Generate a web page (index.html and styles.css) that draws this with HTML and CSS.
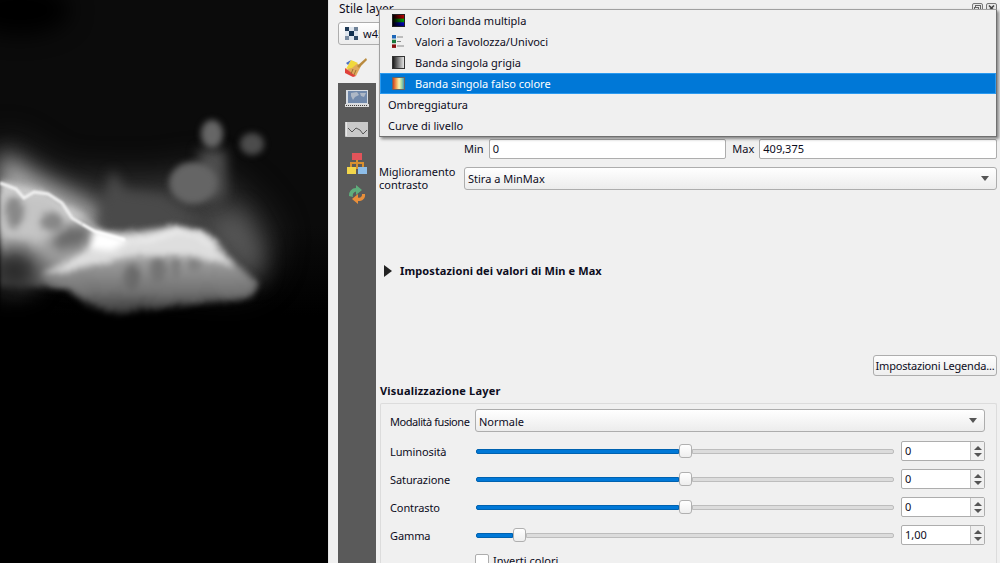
FILE: index.html
```html
<!DOCTYPE html>
<html lang="it">
<head>
<meta charset="utf-8">
<title>Stile layer</title>
<link rel="stylesheet" href="styles.css">
</head>
<body>
<div class="app">
  <div class="map">
    <svg class="terrain" viewBox="0 0 328 563" width="328" height="563" aria-hidden="true">
      <defs>
        <linearGradient id="sky" x1="0" y1="0" x2="0" y2="1"><stop offset="0" stop-color="#0b0b0b"/><stop offset="0.4" stop-color="#0b0b0b"/><stop offset="0.56" stop-color="#000"/></linearGradient>
        <linearGradient id="land" gradientUnits="userSpaceOnUse" x1="0" y1="225" x2="0" y2="310"><stop offset="0" stop-color="#cfcfcf"/><stop offset="0.4" stop-color="#a0a0a0"/><stop offset="0.8" stop-color="#707070"/><stop offset="1" stop-color="#3a3a3a"/></linearGradient>
        <filter id="b40" color-interpolation-filters="sRGB" x="-60%" y="-60%" width="220%" height="220%"><feGaussianBlur stdDeviation="18"/></filter>
        <filter id="b12" color-interpolation-filters="sRGB" x="-60%" y="-60%" width="220%" height="220%"><feGaussianBlur stdDeviation="11"/></filter>
        <filter id="b6" color-interpolation-filters="sRGB" x="-60%" y="-60%" width="220%" height="220%"><feGaussianBlur stdDeviation="6"/></filter>
        <filter id="b3" color-interpolation-filters="sRGB" x="-60%" y="-60%" width="220%" height="220%"><feGaussianBlur stdDeviation="3"/></filter>
        <filter id="b1" color-interpolation-filters="sRGB" x="-60%" y="-60%" width="220%" height="220%"><feGaussianBlur stdDeviation="1.2"/></filter>
        <filter id="rough" color-interpolation-filters="sRGB" filterUnits="userSpaceOnUse" x="0" y="0" width="328" height="563">
          <feTurbulence type="fractalNoise" baseFrequency="0.04" numOctaves="2" seed="4" result="n"/>
          <feDisplacementMap in="SourceGraphic" in2="n" scale="5" xChannelSelector="R" yChannelSelector="G"/>
          <feGaussianBlur stdDeviation="1.6"/>
        </filter>
      </defs>
      <rect width="328" height="563" fill="url(#sky)"/>
      <ellipse cx="20" cy="10" rx="50" ry="25" fill="#000" filter="url(#b12)"/>
      <path d="M0 140 L60 178 L110 180 L165 180 L205 170 L245 200 L272 235 L262 270 L240 285 L100 270 L0 250Z" fill="#3c3c3c" filter="url(#b40)"/>
      <path d="M0 150 L35 175 L85 200 L125 230 L0 240Z" fill="#aaa" filter="url(#b12)"/>
      <path d="M95 225 L112 170 L125 190 L165 195 L205 225 L120 240Z" fill="#4a4a4a" filter="url(#b6)"/>
      <path d="M205 225 L240 210 L262 250 L258 283Z" fill="#575757" filter="url(#b12)"/>
      <path d="M198 150 L226 150 L226 195 L210 205 L200 175Z" fill="#4e4e4e" filter="url(#b6)"/>
      <ellipse cx="212" cy="134" rx="11" ry="14" fill="#666" filter="url(#b3)"/>
      <ellipse cx="252" cy="144" rx="12" ry="11" fill="#4c4c4c" filter="url(#b3)"/>
      <ellipse cx="193" cy="183" rx="24" ry="21" fill="#656565" filter="url(#b3)"/>
      <g filter="url(#rough)">
        <path d="M0 180 L40 190 L75 210 L100 232 L130 232 L180 226 L205 233 L235 262 L258 283 L251 297 L220 302 L160 308 L120 313 L90 305 L68 290 L40 285 L0 285Z" fill="url(#land)" filter="url(#b3)"/>
        <ellipse cx="14" cy="272" rx="28" ry="24" fill="#2a2a2a" filter="url(#b12)"/>
        <path d="M0 188 L50 198 L68 215 L48 238 L0 232Z" fill="#c4c4c4" filter="url(#b6)"/>
        <ellipse cx="14" cy="212" rx="9" ry="16" fill="#888" filter="url(#b3)"/>
        <ellipse cx="52" cy="222" rx="12" ry="9" fill="#888" filter="url(#b3)"/>
        <path d="M66 225 L88 224 L92 238 L82 248 L55 252 L50 240Z" fill="#6a6a6a" filter="url(#b6)"/>
        <ellipse cx="132" cy="278" rx="8" ry="14" fill="#6a6a6a" filter="url(#b3)"/>
        <ellipse cx="158" cy="270" rx="8" ry="14" fill="#747474" filter="url(#b3)"/>
        <ellipse cx="176" cy="268" rx="5" ry="13" fill="#7c7c7c" filter="url(#b3)"/>
        <ellipse cx="195" cy="262" rx="6" ry="11" fill="#808080" filter="url(#b3)"/>
        <path d="M40 275 L92 248 L128 240 L178 228 L205 236 L236 266 L195 256 L130 256 L85 268Z" fill="#dedede" filter="url(#b3)"/>
        <path d="M128 242 L155 238 L178 230 L198 234 L215 246" fill="none" stroke="#f4f4f4" stroke-width="4" filter="url(#b3)"/>
      </g>
      <path d="M0 183 L16 189 L24 198 L34 192 L48 194 L62 203 L72 218 L82 224" fill="none" stroke="#f2f2f2" stroke-width="3" filter="url(#b1)"/>
      <path d="M82 224 L96 232 L125 240" fill="none" stroke="#fff" stroke-width="3" filter="url(#b1)"/>
      <path d="M96 232 L126 241 L112 249 L92 248Z" fill="#fff" stroke="#fff" stroke-width="4" filter="url(#b3)"/>
    </svg>
  </div>
  <div class="strip"></div>
  <main class="panel">
    <div class="title-bar">
      <span class="title">Stile layer</span>
      <span class="dock-buttons">
        <svg width="11" height="10" viewBox="0 0 11 10" aria-hidden="true"><rect x="0.5" y="0.5" width="10" height="9" rx="1.5" fill="#e8e8e8" stroke="#777"/><rect x="3.5" y="2.5" width="5" height="4" fill="none" stroke="#666"/><rect x="2.5" y="4.5" width="4" height="3" fill="#e8e8e8" stroke="#666"/></svg>
        <svg width="11" height="10" viewBox="0 0 11 10" aria-hidden="true"><rect x="0.5" y="0.5" width="10" height="9" rx="1.5" fill="#e8e8e8" stroke="#777"/><path d="M3 2.5 L8 7.5 M8 2.5 L3 7.5" stroke="#444" stroke-width="1.6"/></svg>
      </span>
    </div>
    <div class="layer-row">
      <div class="combo layer-combo">
        <svg width="13" height="13" viewBox="0 0 13 13" aria-hidden="true"><rect width="13" height="13" fill="#dfe6ee"/><rect x="0" y="0" width="4" height="4" fill="#1f3a56"/><rect x="4" y="4" width="5" height="5" fill="#12304f"/><rect x="9" y="0" width="4" height="4" fill="#6f8298"/><rect x="0" y="9" width="4" height="4" fill="#7b8da2"/><rect x="9" y="9" width="4" height="4" fill="#324d69"/></svg>
        <span>w45</span>
      </div>
    </div>
    <div class="body">
      <nav class="tabs">
        <div class="tab-active">
          <svg width="24" height="22" viewBox="0 0 24 22" aria-hidden="true"><path d="M3 14 L9 5 L17 10 L12 20Z" fill="#e0aa5c"/><path d="M2 13 L7 4 L14 7 L8 12Z" fill="#f1d93c"/><path d="M7 4 L4 9 L2 7Z" fill="#4a6fc0"/><path d="M1 12 L12 20 L9 21 L1 17Z" fill="#e0413a"/><path d="M13 10 L22 2 L23 4 L15 12Z" fill="#b98a3e"/><path d="M9 13 L7 18 M12 14 L10 19" stroke="#9c7433" stroke-width="1"/></svg>
        </div>
        <div class="tab-rail">
          <svg class="rail-icon" width="24" height="20" viewBox="0 0 24 20" aria-hidden="true"><rect x="1" y="1" width="22" height="14" fill="#d8dde3"/><rect x="3" y="2" width="19" height="12" fill="#7189ab"/><path d="M6 4 L12 3 L14 6 L10 8 L8 11 L6 7Z M15 4 L21 4 L19 8 L16 7Z" fill="#aeb8c6"/><rect x="0" y="15" width="24" height="3" fill="#dcdcdc"/><path d="M1 16.5 H23" stroke="#444" stroke-dasharray="1 1"/></svg>
          <svg class="rail-icon" width="24" height="17" viewBox="0 0 24 17" aria-hidden="true"><rect x="1" y="1" width="22" height="13" fill="#c9c9c9"/><path d="M1 1 V15 H23" fill="none" stroke="#f0f0f0" stroke-width="1.6"/><path d="M3 7 L7 11 L11 7 L15 9 L18 13 L22 9" fill="none" stroke="#555"/></svg>
          <svg class="rail-icon tree" width="20" height="23" viewBox="0 0 20 23" aria-hidden="true"><path d="M4 16 V11 H16 V16 M10 7 V17" fill="none" stroke="#d9902f" stroke-width="2"/><rect x="5" y="1" width="10" height="7" fill="#e2545a"/><rect x="0" y="15" width="9" height="7" fill="#f2d64b"/><rect x="11" y="15" width="9" height="7" fill="#8dbde8"/></svg>
          <svg class="rail-icon" width="20" height="20" viewBox="0 0 20 20" aria-hidden="true"><path d="M2 12 A7 7 0 0 1 9 4 V1 L15 6 L9 11 V7.5 A4 4 0 0 0 6 13 Z" fill="#5fae7c"/><path d="M18 10 A6 6 0 0 1 11 17 V20 L5 15 L11 10 V13.5 A3 3 0 0 0 15 10 Z" fill="#e98f3a"/></svg>
        </div>
      </nav>
      <section class="content">
        <div class="minmax">
          <label class="mm-label">Min</label>
          <div class="input">0</div>
          <label class="mm-label">Max</label>
          <div class="input">409,375</div>
        </div>
        <div class="contrast">
          <label class="contrast-label">Miglioramento contrasto</label>
          <div class="combo grow"><span>Stira a MinMax</span><i class="caret"></i></div>
        </div>
        <div class="collapsed">
          <i class="arrow"></i>
          <b>Impostazioni dei valori di Min e Max</b>
        </div>
        <div class="legend-row"><div class="button">Impostazioni Legenda...</div></div>
        <h2 class="group-title">Visualizzazione Layer</h2>
        <div class="group">
          <div class="form-row">
            <label class="form-label tight">Modalità fusione</label>
            <div class="combo grow"><span>Normale</span><i class="caret"></i></div>
          </div>
          <div class="slider-row">
            <label class="form-label">Luminosità</label>
            <div class="slider"><div class="fill half"></div><div class="knob"></div><div class="rest"></div></div>
            <div class="spin"><span class="spin-value">0</span><span class="spin-btns"><i class="up"></i><i class="down"></i></span></div>
          </div>
          <div class="slider-row">
            <label class="form-label">Saturazione</label>
            <div class="slider"><div class="fill half"></div><div class="knob"></div><div class="rest"></div></div>
            <div class="spin"><span class="spin-value">0</span><span class="spin-btns"><i class="up"></i><i class="down"></i></span></div>
          </div>
          <div class="slider-row">
            <label class="form-label">Contrasto</label>
            <div class="slider"><div class="fill half"></div><div class="knob"></div><div class="rest"></div></div>
            <div class="spin"><span class="spin-value">0</span><span class="spin-btns"><i class="up"></i><i class="down"></i></span></div>
          </div>
          <div class="slider-row">
            <label class="form-label">Gamma</label>
            <div class="slider"><div class="fill low"></div><div class="knob"></div><div class="rest"></div></div>
            <div class="spin"><span class="spin-value">1,00</span><span class="spin-btns"><i class="up"></i><i class="down"></i></span></div>
          </div>
          <div class="check-row">
            <i class="checkbox"></i><span>Inverti colori</span>
          </div>
        </div>
      </section>
    </div>
    <div class="popup">
      <div class="item">
        <svg width="13" height="13" viewBox="0 0 13 13" aria-hidden="true"><defs><linearGradient id="rgb" x1="0" y1="0" x2="0" y2="1"><stop offset="0" stop-color="#c00"/><stop offset="0.33" stop-color="#900"/><stop offset="0.34" stop-color="#0b0"/><stop offset="0.66" stop-color="#080"/><stop offset="0.67" stop-color="#00d"/><stop offset="1" stop-color="#008"/></linearGradient><linearGradient id="fade"><stop offset="0" stop-color="#000"/><stop offset="1" stop-color="#000" stop-opacity="0"/></linearGradient></defs><rect x="0.5" y="0.5" width="12" height="12" fill="url(#rgb)" stroke="#222"/><rect x="1" y="1" width="11" height="11" fill="url(#fade)"/></svg>
        <span>Colori banda multipla</span>
      </div>
      <div class="item">
        <svg width="13" height="13" viewBox="0 0 13 13" aria-hidden="true"><rect x="0" y="0" width="4" height="3.5" fill="#1c66b8"/><rect x="0" y="4.7" width="4" height="3.5" fill="#1a7a3c"/><rect x="0" y="9.4" width="4" height="3.5" fill="#8a1010"/><path d="M5 2 H11 M5 6.5 H9 M5 11 H12" stroke="#888"/></svg>
        <span>Valori a Tavolozza/Univoci</span>
      </div>
      <div class="item">
        <svg width="13" height="13" viewBox="0 0 13 13" aria-hidden="true"><defs><linearGradient id="gray"><stop offset="0" stop-color="#111"/><stop offset="1" stop-color="#eee"/></linearGradient></defs><rect x="0.5" y="0.5" width="12" height="12" fill="url(#gray)" stroke="#333"/></svg>
        <span>Banda singola grigia</span>
      </div>
      <div class="item selected">
        <svg width="13" height="13" viewBox="0 0 13 13" aria-hidden="true"><defs><linearGradient id="false"><stop offset="0" stop-color="#c8321e"/><stop offset="0.3" stop-color="#f0a050"/><stop offset="0.55" stop-color="#fbf4b0"/><stop offset="0.8" stop-color="#8fd0a0"/><stop offset="1" stop-color="#3a80c0"/></linearGradient></defs><rect x="0.5" y="0.5" width="12" height="12" fill="url(#false)" stroke="#666"/></svg>
        <span>Banda singola falso colore</span>
      </div>
      <div class="item plain"><span>Ombreggiatura</span></div>
      <div class="item plain"><span>Curve di livello</span></div>
    </div>
  </main>
</div>
</body>
</html>
```
FILE: styles.css
```css
* { box-sizing: border-box; }
html, body { margin: 0; height: 100%; overflow: hidden; }
body {
  font-family: "Noto Sans", "Open Sans", sans-serif;
  font-size: 11px;
  line-height: 14px;
  color: #0c0c1c;
  background: #f0f0f0;
}
.app { display: flex; width: 1000px; height: 563px; overflow: hidden; }
.map { width: 328px; flex: none; background: #000; }
.terrain { display: block; }
.strip { width: 10px; flex: none; background: #f0f0f0; border-left: 1px solid #e4e4e4; }
.panel { position: relative; flex: 1; min-width: 0; display: flex; flex-direction: column; }

.title-bar { height: 22px; display: flex; justify-content: space-between; padding: 1px 3px 0 1px; flex: none; }
.title { font-size: 12px; line-height: 15px; }
.dock-buttons { display: flex; gap: 3px; height: 10px; margin-top: 2px; }
.layer-row { height: 28px; flex: none; padding-right: 3px; }

.combo {
  display: flex; align-items: center; height: 23px; padding: 0 3px;
  background: linear-gradient(#ffffff, #ececec);
  border: 1px solid #adadad; border-radius: 3px;
  white-space: nowrap;
}
.layer-combo { gap: 5px; padding-left: 6px; }
.grow { flex: 1; min-width: 0; justify-content: space-between; }
.caret { width: 0; height: 0; border-left: 4px solid transparent; border-right: 4px solid transparent; border-top: 5px solid #555; margin-right: 4px; }

.body { flex: 1; display: flex; min-height: 0; }
.tabs { width: 38px; flex: none; display: flex; flex-direction: column; }
.tab-active { height: 33px; padding: 6px 0 0 6px; }
.tab-rail { flex: 1; background: #5a5a5a; display: flex; flex-direction: column; align-items: center; padding-top: 6px; }
.rail-icon { display: block; margin-bottom: 12px; }
.rail-icon.tree { margin-bottom: 9px; margin-top: 2px; }

.content { flex: 1; min-width: 0; padding: 89px 3px 0 2px; display: flex; flex-direction: column; }
.minmax { display: flex; align-items: center; height: 20px; padding-left: 86px; }
.mm-label { margin-right: 5px; white-space: nowrap; }
.minmax .input + .mm-label { margin-left: 6px; }
.input {
  flex: 1; min-width: 0; height: 20px; padding: 2px 3px;
  background: #fff; border: 1px solid #adadad; border-radius: 2px;
}
.contrast { display: flex; align-items: center; margin-top: 8px; height: 23px; }
.contrast-label { width: 86px; flex: none; line-height: 13px; padding: 0 0 2px 1px; }
.collapsed { display: flex; align-items: center; gap: 8px; height: 16px; margin-top: 74px; padding-left: 6px; font-size: 11px; }
.collapsed b { letter-spacing: 0.11px; }
.arrow { width: 0; height: 0; border-top: 6px solid transparent; border-bottom: 6px solid transparent; border-left: 8px solid #222; }
.legend-row { display: flex; justify-content: flex-end; margin-top: 77px; }
.button {
  height: 21px; padding: 3px 0; width: 124px; white-space: nowrap; text-align: center; letter-spacing: -0.2px;
  background: linear-gradient(#fdfdfd, #eeeeee); border: 1px solid #adadad; border-radius: 3px;
}
.group-title { margin: 8px 0 5px 2px; font-size: 11px; line-height: 14px; font-weight: 700; letter-spacing: 0.2px; }
.group { margin-left: 2px; border: 1px solid #dcdcdc; border-bottom: none; border-radius: 2px; padding: 5px 11px 0 9px; flex: 1; }
.form-row { display: flex; align-items: center; height: 23px; }
.form-row .form-label, .form-row .combo span { padding-top: 2px; }
.form-label { width: 85px; flex: none; white-space: nowrap; letter-spacing: -0.1px; }
.tight { letter-spacing: -0.45px; }
.slider-row { display: flex; align-items: center; height: 20px; margin-top: 8px; }
.slider-row .form-label { padding-top: 2px; }
.form-row + .slider-row { margin-top: 9px; }
.slider { flex: 1; min-width: 0; display: flex; align-items: center; margin: 0 7px 0 1px; height: 16px; }
.fill { height: 5px; background: #0078d7; border-radius: 2px 0 0 2px; border: 1px solid #0062b0; }
.half { width: 203px; }
.low { width: 37px; }
.rest { flex: 1; height: 5px; background: #dcdcdc; border: 1px solid #bdbdbd; border-radius: 0 2px 2px 0; }
.knob { width: 13px; height: 14px; flex: none; background: linear-gradient(#fff, #eee); border: 1px solid #b0b0b0; border-radius: 3px; }
.spin { width: 84px; height: 20px; flex: none; display: flex; background: #fff; border: 1px solid #adadad; border-radius: 2px; }
.spin-value { flex: 1; padding: 2px 3px; }
.spin-btns { width: 14px; display: flex; flex-direction: column; align-items: center; justify-content: center; gap: 3px; background: #f0f0f0; border-left: 1px solid #c4c4c4; }
.up { width: 0; height: 0; border-left: 4px solid transparent; border-right: 4px solid transparent; border-bottom: 4px solid #555; }
.down { width: 0; height: 0; border-left: 4px solid transparent; border-right: 4px solid transparent; border-top: 4px solid #555; }
.check-row { display: flex; align-items: center; gap: 4px; padding-left: 85px; margin-top: 9px; height: 14px; }
.checkbox { width: 14px; height: 14px; background: #fff; border: 1px solid #adadad; border-radius: 2px; }

.popup {
  position: absolute; left: 41px; top: 9px; width: 618px; height: 128px;
  padding: 0; background: #f0f0f0;
  border: 1px solid #a0a0a0; border-right-color: #707070; border-bottom-color: #707070;
  box-shadow: 2px 2px 3px rgba(0, 0, 0, .45);
}
.item { display: flex; align-items: center; gap: 10px; height: 21px; padding-left: 12px; }
.item.plain { padding-left: 8px; }
.selected { background: #0078d7; color: #fff; box-shadow: inset 0 0 0 1px #2a9af0; }
```
